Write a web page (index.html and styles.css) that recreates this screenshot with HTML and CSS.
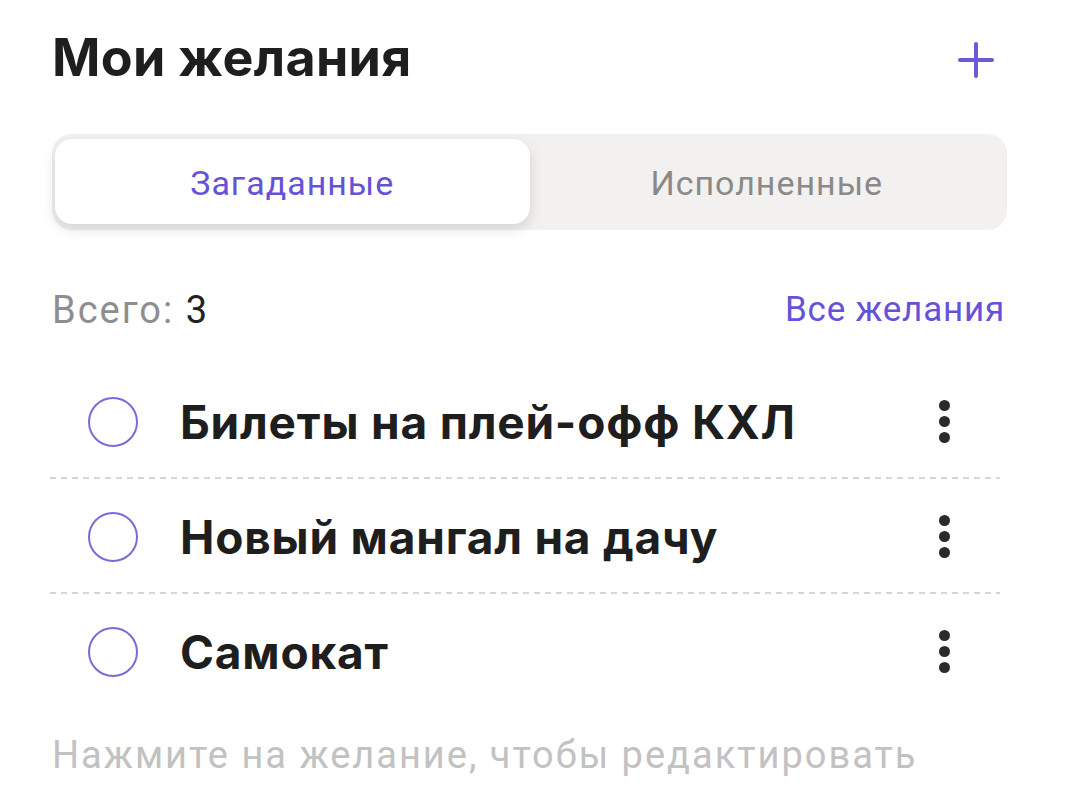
FILE: index.html
```html
<!DOCTYPE html>
<html lang="ru">
<head>
<meta charset="utf-8">
<title>Мои желания</title>
<link rel="stylesheet" href="styles.css">
</head>
<body>
<div class="page">
  <header class="header">
    <h1 class="title">Мои желания</h1>
    <button class="add-btn" aria-label="Добавить">
      <svg width="36" height="36" viewBox="0 0 36 36"><path d="M18 2v32M2 18h32" stroke="currentColor" stroke-width="4" stroke-linecap="round" fill="none"/></svg>
    </button>
  </header>

  <div class="segmented">
    <div class="seg-item seg-active">Загаданные</div>
    <div class="seg-item">Исполненные</div>
  </div>

  <div class="stats">
    <div class="total"><span class="total-label">Всего:</span> <span class="total-num">3</span></div>
    <a class="all-link">Все желания</a>
  </div>

  <ul class="list">
    <li class="row">
      <span class="check"></span>
      <span class="row-text">Билеты на плей-офф КХЛ</span>
      <span class="more"><i></i><i></i><i></i></span>
    </li>
    <li class="row">
      <span class="check"></span>
      <span class="row-text">Новый мангал на дачу</span>
      <span class="more"><i></i><i></i><i></i></span>
    </li>
    <li class="row">
      <span class="check"></span>
      <span class="row-text">Самокат</span>
      <span class="more"><i></i><i></i><i></i></span>
    </li>
  </ul>

  <p class="hint">Нажмите на желание, чтобы редактировать</p>
</div>
</body>
</html>
```

FILE: styles.css
```css
* { box-sizing: border-box; }
html, body { margin: 0; padding: 0; background: #ffffff; }
body { font-family: Roboto, "Liberation Sans", sans-serif; color: #1e1e1e; }

.page {
  width: 1082px;
  padding: 18px 75px 0 52px;
}

.header {
  display: flex;
  align-items: center;
  justify-content: space-between;
  height: 80px;
}
.title {
  margin: 0;
  font-family: Inter, "Liberation Sans", sans-serif;
  font-weight: 700;
  font-size: 52px;
  line-height: 62px;
  letter-spacing: 0.3px;
  color: #1e1e1e;
}
.add-btn {
  border: 0;
  background: none;
  padding: 0;
  margin-right: 13px;
  margin-top: 4px;
  width: 36px;
  height: 36px;
  color: #6b5bd6;
  display: flex;
}

.segmented {
  margin-top: 36px;
  height: 96px;
  background: #f2f1f0;
  border-radius: 20px;
  padding: 5px 3px 6px;
  display: grid;
  grid-template-columns: 1fr 1fr;
}
.seg-item {
  display: flex;
  align-items: center;
  justify-content: center;
  font-size: 34px;
  letter-spacing: 1px;
  color: #8a8a8a;
  border-radius: 17px;
  padding-top: 2px;
}
.seg-active {
  background: #ffffff;
  color: #6652d6;
  box-shadow: 0 5px 14px rgba(0, 0, 0, 0.13);
}

.stats {
  margin-top: 58px;
  display: flex;
  justify-content: space-between;
  align-items: center;
  height: 44px;
  line-height: 44px;
}
.total {
  font-size: 38px;
  letter-spacing: 2px;
}
.total-label { color: #8e8e8e; }
.total-num { color: #222222; }
.all-link {
  font-size: 35px;
  letter-spacing: 0.8px;
  color: #6652d6;
  margin-right: 2px;
}

.list {
  list-style: none;
  margin: 32px 7px 0 -2px;
  padding: 0;
}
.row {
  display: flex;
  align-items: center;
  height: 115px;
  padding: 0 50px 0 38px;
  background-image: repeating-linear-gradient(to right, #d6d6d6 0 6px, transparent 6px 11px);
  background-size: 100% 2px;
  background-position: left bottom;
  background-repeat: no-repeat;
}
.row:last-child { background-image: none; }
.check {
  flex: none;
  width: 50px;
  height: 50px;
  border: 2.5px solid #7a6bd8;
  border-radius: 50%;
}
.row-text {
  flex: 1;
  margin-left: 42px;
  font-family: Inter, "Liberation Sans", sans-serif;
  font-weight: 700;
  font-size: 46px;
  letter-spacing: 0.8px;
  color: #1e1e1e;
}
.more {
  flex: none;
  display: flex;
  flex-direction: column;
  gap: 5px;
}
.more i {
  display: block;
  width: 11px;
  height: 11px;
  border-radius: 50%;
  background: #2a2a2a;
}

.hint {
  margin: 24px 0 0;
  font-size: 38px;
  line-height: 44px;
  letter-spacing: 2px;
  color: #c2c2c2;
}
```
